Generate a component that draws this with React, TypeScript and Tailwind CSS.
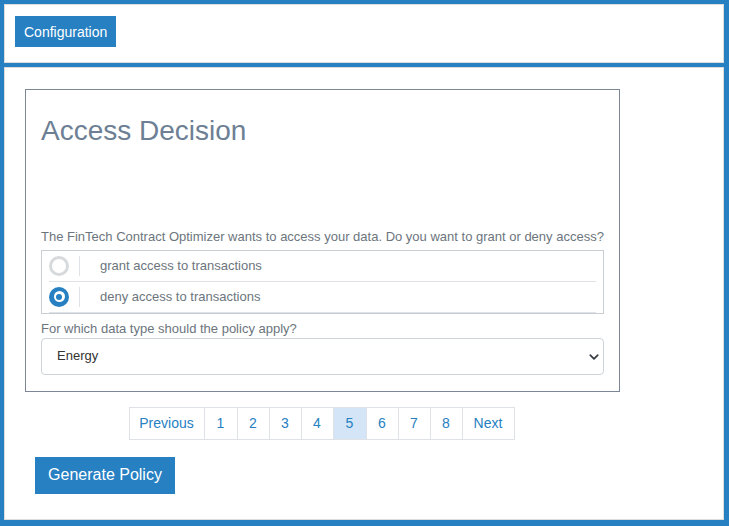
import React from "react";

const pages = ["1", "2", "3", "4", "5", "6", "7", "8"];

export default function App() {
  return (
    <div
      className="h-[526px] w-[729px] bg-[#2680c2] pt-[4px] pl-[4px] pr-[5px] pb-[6px] flex flex-col gap-[4px]"
      style={{ fontFamily: '"Liberation Sans", Arial, sans-serif' }}
    >
      {/* Top bar */}
      <div className="h-[59px] bg-white border border-[#dcdcdc] pl-[10px] pt-[11px]">
        <button className="h-[31px] px-[9px] bg-[#2680c2] text-white text-[14px] leading-none">
          Configuration
        </button>
      </div>

      {/* Main panel */}
      <div className="flex-1 bg-white border border-[#dcdcdc] pl-[20px] pt-[21px]">
        <div className="w-[595px] flex flex-col items-center">
          <div className="w-full border border-[#7b8796] px-[15px] pt-[24px] pb-[16px]">
            <h1 className="text-[28px] leading-[1.2] text-[#6d7f94] font-normal">Access Decision</h1>
            <p className="mt-[79px] text-[13px] leading-[19px] text-[#6c757d]">
              The FinTech Contract Optimizer wants to access your data. Do you want to grant or deny access?
            </p>
            <div className="mt-[4px] border border-[#c9ced3]">
              <div className="mx-[7px] h-[31px] flex items-center border-b border-[#dee2e6]">
                <span className="w-[20px] h-[20px] rounded-full border-[3px] border-[#d6dadd] bg-white" />
                <span className="ml-[10px] w-px h-[20px] bg-[#dee2e6]" />
                <span className="ml-[20px] text-[13px] text-[#6c757d]">grant access to transactions</span>
              </div>
              <div className="mx-[7px] h-[31px] flex items-center border-b border-[#dee2e6]">
                <span className="w-[20px] h-[20px] rounded-full bg-[#2680c2] flex items-center justify-center">
                  <span className="w-[11px] h-[11px] rounded-full bg-white flex items-center justify-center">
                    <span className="w-[6px] h-[6px] rounded-full bg-[#2680c2]" />
                  </span>
                </span>
                <span className="ml-[10px] w-px h-[20px] bg-[#dee2e6]" />
                <span className="ml-[20px] text-[13px] text-[#6c757d]">deny access to transactions</span>
              </div>
            </div>
            <p className="mt-[5px] text-[13px] leading-[19px] text-[#6c757d]">
              For which data type should the policy apply?
            </p>
            <div className="relative">
              <select
                defaultValue="Energy"
                className="w-full h-[37px] appearance-none rounded-[4px] border border-[#ced4da] bg-white pl-[15px] text-[13px] text-[#333] outline-none"
                style={{ fontFamily: '"Liberation Sans", Arial, sans-serif' }}
              >
                <option>Energy</option>
                <option>Transactions</option>
              </select>
              <svg
                className="absolute right-[4px] top-[14px] pointer-events-none"
                width="12"
                height="10"
                viewBox="0 0 16 16"
              >
                <path d="M2 5l6 6 6-6" fill="none" stroke="#343a40" strokeWidth="2.6" strokeLinecap="round" strokeLinejoin="round" />
              </svg>
            </div>
          </div>

          {/* Pagination */}
          <div className="mt-[15px] mr-[2px] flex h-[33px] text-[14px] text-[#2680c2]">
            <span className="w-[75px] flex items-center justify-center border-y border-l border-[#dee2e6]">Previous</span>
            {pages.map((p) => (
              <span
                key={p}
                className={
                  (p === "1" || p === "5" ? "w-[33px] " : "w-[32px] ") +
                  (p === "5" ? "bg-[#d3e5f6] " : "") +
                  "flex items-center justify-center border-y border-l border-[#dee2e6]"
                }
              >
                {p}
              </span>
            ))}
            <span className="w-[53px] flex items-center justify-center border border-[#dee2e6]">Next</span>
          </div>
        </div>

        <button className="mt-[17px] ml-[10px] w-[140px] h-[37px] bg-[#2680c2] text-white text-[16px]">
          Generate Policy
        </button>
      </div>
    </div>
  );
}
